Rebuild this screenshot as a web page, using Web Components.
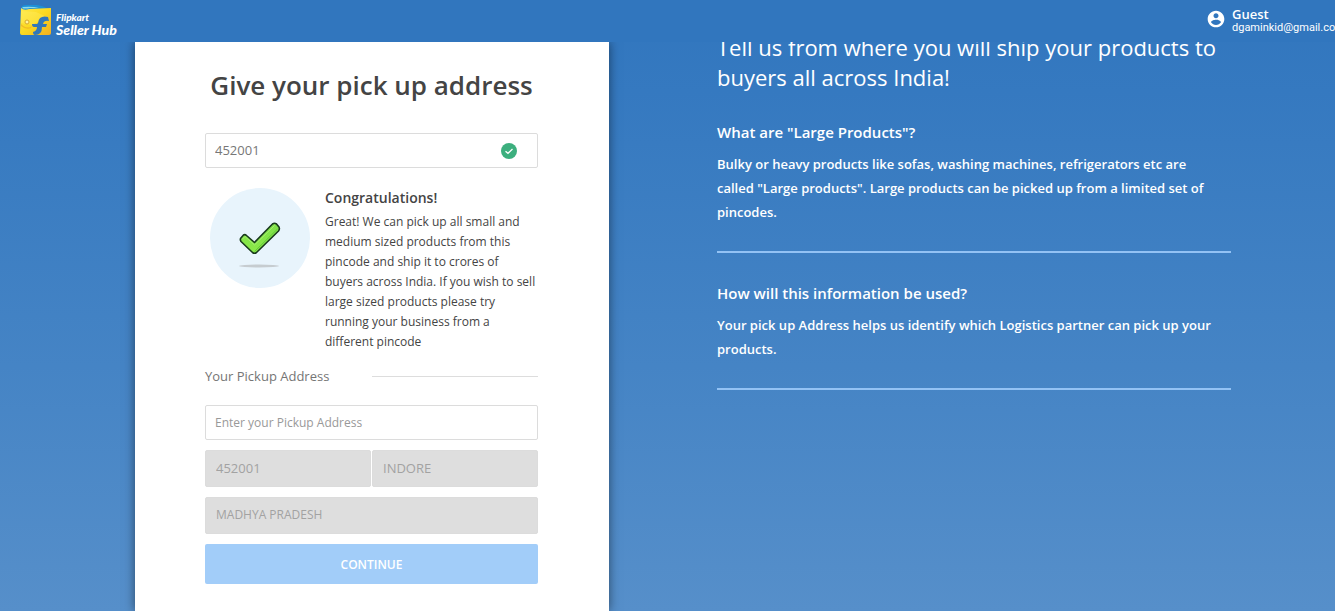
<!DOCTYPE html>
<html lang="en">
<head>
<meta charset="utf-8">
<meta name="viewport" content="width=device-width, initial-scale=1">
<title>Flipkart Seller Hub</title>
<style>
  html, body { margin: 0; height: 100%; }
  body { font-family: "Open Sans", "Noto Sans", sans-serif; }
</style>
</head>
<body>
<seller-app></seller-app>
<script>
const define = (name, html, setup) => {
  const tpl = document.createElement('template');
  tpl.innerHTML = html;
  customElements.define(name, class extends HTMLElement {
    constructor() {
      super();
      this.attachShadow({ mode: 'open' }).append(tpl.content.cloneNode(true));
    }
    connectedCallback() { if (setup) setup(this, this.shadowRoot); }
  });
};

define('seller-logo', `
<style>
  :host { display: block; }
  a { display: flex; align-items: flex-end; gap: 4px; color: #fff; text-decoration: none; font-style: italic; font-weight: 700; }
  svg { display: block; width: 32px; height: 32px; }
  .name { display: flex; flex-direction: column; font-family: Lato, "Open Sans", sans-serif; font-weight: 900; }
  .small { font-size: 10px; line-height: 12px; }
  .big { font-size: 14px; line-height: 14px; }
</style>
<a href="#">
  <svg viewBox="0 0 32 32" aria-hidden="true">
    <defs><linearGradient id="g" x1="0" y1="0" x2="1" y2="1">
      <stop offset="0" stop-color="#ffe94d"/><stop offset=".5" stop-color="#fbd91f"/><stop offset="1" stop-color="#f2ae22"/>
    </linearGradient></defs>
    <path d="M1 4Q1 0 6 0L17 0Q24 1 28 4L8 5Q3 6 1 4Z" fill="#1d91d8"/>
    <path d="M3 2Q12 1 19 3L10 3Q5 4 2 3Z" fill="#8bd9ee"/>
    <path d="M1 3Q4 6 9 4L31 3V28Q31 30 29 30L2 30Q0 30 0 28Z" fill="url(#g)"/>
    <path d="M1 6L16 7L27 12L12 20L1 18Z" fill="#fff06a" opacity=".35"/>
    <path d="M28 12Q19 10 18 18L17 19H12Q12 22 14 22H17Q17 26 13 27Q13 30 15 30Q22 30 22 22H26L27 19H23Q24 15 29 16Z" fill="#3277ba"/>
    <path d="M1 19Q7 25 12 21L11 23Q6 25 1 21Z" fill="#ecac27" opacity=".7"/>
    <circle cx="7" cy="17" r="2" fill="#fff4a0" stroke="#d9a72b" stroke-width="1"/>
  </svg>
  <span class="name"><span class="small">Flipkart</span><span class="big">Seller Hub</span></span>
</a>`);

define('user-badge', `
<style>
  :host { display: flex; align-items: flex-start; gap: 6px; color: #fff; white-space: nowrap; }
  svg { display: block; width: 20px; height: 20px; margin-top: 4px; }
  .text { display: flex; flex-direction: column; width: 103px; padding-top: 3px; }
  .name { font-size: 13px; line-height: 13px; font-weight: 600; }
  .mail { font-size: 11px; line-height: 13px; font-family: Roboto, "Open Sans", sans-serif; }
</style>
<svg viewBox="0 0 24 24" fill="#fff" aria-hidden="true"><path d="M12 2C6.48 2 2 6.48 2 12s4.48 10 10 10 10-4.48 10-10S17.52 2 12 2zm0 3c1.66 0 3 1.34 3 3s-1.340 3-3 3-3-1.340-3-3 1.340-3 3-3zm0 14.200c-2.500 0-4.710-1.280-6-3.220.030-1.990 4-3.080 6-3.080 1.990 0 5.970 1.090 6 3.080-1.290 1.940-3.500 3.220-6 3.220z"/></svg>
<div class="text"><span class="name"><slot name="name"></slot></span><span class="mail"><slot name="mail"></slot></span></div>`);

define('app-header', `
<style>
  :host { display: block; background: #3176be; }
  header { display: flex; justify-content: space-between; align-items: flex-start; min-height: 37px; padding: 5px 0 0 20px; }
</style>
<header><seller-logo></seller-logo><slot></slot></header>`);

define('text-field', `
<style>
  :host { display: block; min-width: 0; }
  label { display: flex; align-items: center; box-sizing: border-box; height: 35px; border: 1px solid #dcdcdc; border-radius: 2px; background: #fff; padding: 0 20px 0 9px; }
  :host([disabled]) label { height: 37px; background: #dedede; padding: 0 10px; }
  input { flex: 1; min-width: 0; height: 100%; box-sizing: border-box; padding: 0 0 2px; border: 0; outline: 0; background: none; font: 400 13px "Open Sans", sans-serif; color: #777; }
  input::placeholder { color: #999; opacity: 1; font-weight: 400; font-size: 12px; }
  input:disabled { color: #a2a2a2; font-size: 12px; }
  :host([disabled][numeric]) input { font-size: 13px; }
  svg { display: none; width: 16px; height: 16px; }
  :host([valid]) svg { display: block; }
</style>
<label><input type="text">
  <svg viewBox="0 0 16 16" aria-hidden="true"><circle cx="8" cy="8" r="8" fill="#3caf7e"/><path d="M4.500 8.200L7 10.300L11.500 6" fill="none" stroke="#fff" stroke-width="1.300"/></svg>
</label>`, (el, root) => {
  const input = root.querySelector('input');
  input.value = el.getAttribute('value') || '';
  input.placeholder = el.getAttribute('placeholder') || '';
  input.disabled = el.hasAttribute('disabled');
  input.setAttribute('aria-label', el.getAttribute('label'));
});

define('result-message', `
<style>
  :host { display: flex; align-items: flex-start; gap: 15px; padding-left: 5px; }
  svg { flex: none; display: block; width: 100px; height: 100px; }
  h2 { margin: 0; font-size: 14px; line-height: 20px; font-weight: 600; color: #444; }
  p { margin: 4px 0 0; font-size: 12px; line-height: 20px; font-weight: 400; color: #444; }
</style>
<svg viewBox="0 0 100 100" aria-hidden="true">
  <defs><linearGradient id="c" x1="0" y1="0" x2="0" y2="1"><stop offset="0" stop-color="#7fe04a"/><stop offset="1" stop-color="#8bea48"/></linearGradient></defs>
  <circle cx="50" cy="50" r="50" fill="#e8f4fc"/>
  <ellipse cx="49" cy="78" rx="20" ry="1.500" fill="#c6ccd0"/>
  <path d="M30.500 50.500L33.500 47Q35 46 36.500 47.500L44.500 54.500L62.500 36Q64.500 34.500 66.500 36L69 39Q70 41 68.500 43L46.500 64.500Q44.500 66 42.500 64.500L31 53.500Q30 52 30.500 50.500Z" fill="url(#c)" stroke="#183a1c" stroke-width="1.600" stroke-linejoin="round"/>
  <path d="M32.500 51L35 48.500L44.500 57L64.500 37.500" fill="none" stroke="#a5ee70" stroke-width="1"/>
  <path d="M44.500 63.500L67.500 41" fill="none" stroke="#62c83a" stroke-width="1"/>
</svg>
<div><h2><slot name="title"></slot></h2><p><slot></slot></p></div>`);

define('section-label', `
<style>
  :host { display: grid; grid-template-columns: 1fr 1fr; align-items: center; font-size: 13px; line-height: 18px; color: #757575; }
  hr { width: 100%; margin: 0; border: 0; border-top: 1px solid #ddd; }
</style>
<span><slot></slot></span><hr>`);

define('action-button', `
<style>
  :host { display: block; }
  button { display: block; width: 100%; height: 40px; border: 0; border-radius: 2px; background: #a2cdf9; color: #fff; font: 600 12px "Open Sans", sans-serif; }
</style>
<button type="button"><slot></slot></button>`);

define('pickup-card', `
<style>
  :host { display: block; background: #fff; box-shadow: 0 0 10px rgba(0, 0, 0, .5); }
  form { padding: 23px 71px 27px 70px; }
  h1 { margin: 0 0 28px; text-align: center; font-size: 26px; line-height: 40px; font-weight: 600; color: #444; white-space: nowrap; }
  result-message { margin: 20px 0 15px; }
  section-label { margin-bottom: 20px; }
  .fields { display: grid; gap: 10px; }
  .pair { display: grid; grid-template-columns: 1fr 1fr; gap: 1px; }
</style>
<form>
  <h1>Give your pick up address</h1>
  <text-field label="Pincode" value="452001" valid></text-field>
  <result-message><span slot="title">Congratulations!</span>Great! We can pick up all small and medium sized products from this pincode and ship it to crores of buyers across India. If you wish to sell large sized products please try running your business from a different pincode</result-message>
  <section-label>Your Pickup Address</section-label>
  <div class="fields">
    <text-field label="Pickup address" placeholder="Enter your Pickup Address"></text-field>
    <div class="pair">
      <text-field label="Pincode" value="452001" disabled numeric></text-field>
      <text-field label="City" value="INDORE" disabled numeric></text-field>
    </div>
    <text-field label="State" value="MADHYA PRADESH" disabled></text-field>
    <action-button>CONTINUE</action-button>
  </div>
</form>`);

define('info-item', `
<style>
  :host { display: block; border-bottom: 2px solid #93c2f4; padding-bottom: 27px; }
  h3 { margin: 0 0 8px; font-size: 15px; line-height: 24px; font-weight: 600; }
  p { margin: 0; padding-right: 12px; font-size: 13px; line-height: 24px; font-weight: 600; }
</style>
<h3><slot name="title"></slot></h3><p><slot></slot></p>`);

define('info-panel', `
<style>
  :host { display: block; color: #fff; }
  h2 { margin: 0 0 28px; font-size: 22px; line-height: 30px; font-weight: 400; }
  .items { display: grid; gap: 28px; }
</style>
<h2>Tell us from where you will ship your products to buyers all across India!</h2>
<div class="items">
  <info-item><span slot="title">What are "Large Products"?</span>Bulky or heavy products like sofas, washing machines, refrigerators etc are called "Large products". Large products can be picked up from a limited set of pincodes.</info-item>
  <info-item><span slot="title">How will this information be used?</span>Your pick up Address helps us identify which Logistics partner can pick up your products.</info-item>
</div>`);

define('seller-app', `
<style>
  :host { display: flex; flex-direction: column; height: 100vh; overflow: hidden; background: linear-gradient(#3176be, #3579c0 15%, #4584c5 60%, #568fca); }
  main { flex: 1; min-height: 0; overflow: hidden; display: grid; grid-template-columns: 474fr 514fr; gap: 108px; padding: 0 104px 0 135px; }
  /* the info column starts scrolled under the header */
  info-panel { margin-top: -10px; }
</style>
<app-header><user-badge><span slot="name">Guest</span><span slot="mail">dgaminkid@gmail.co</span></user-badge></app-header>
<main><pickup-card></pickup-card><info-panel></info-panel></main>`);
</script>
</body>
</html>
